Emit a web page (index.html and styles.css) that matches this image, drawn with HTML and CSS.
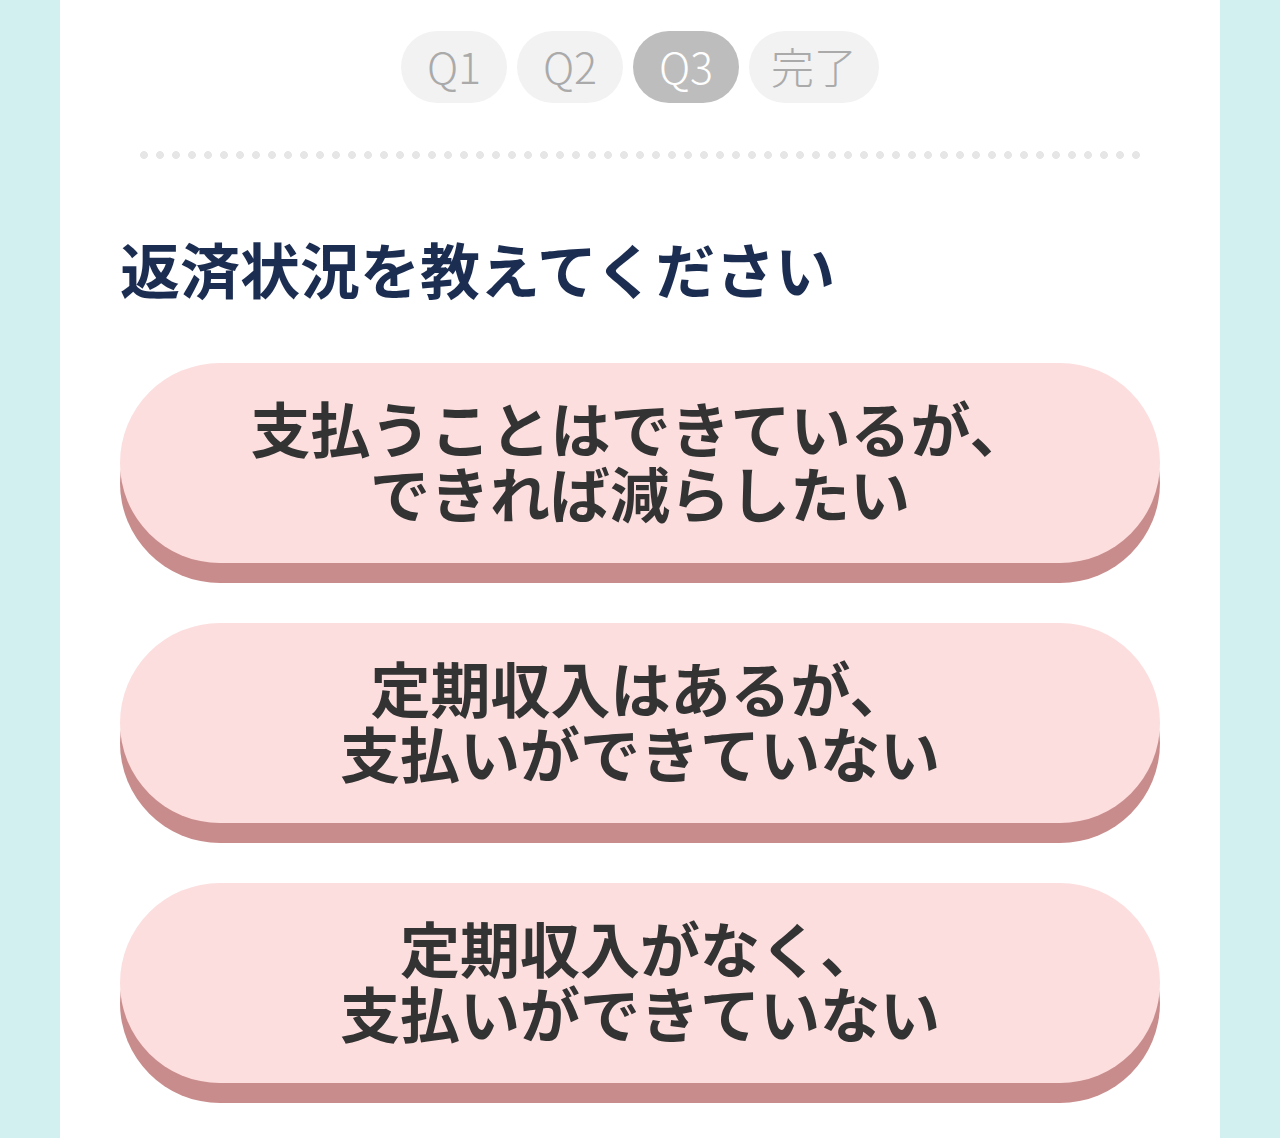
FILE: index.html
```html
<!DOCTYPE html>
<html lang="ja">
<head>
    <meta charset="UTF-8">
    <meta name="viewport" content="width=device-width, initial-scale=1.0">
    <title>返済状況を教えてください</title>
    <link rel="stylesheet" href="styles.css">
</head>
<body>
    <div class="panel">
        <div class="steps">
            <span class="step">Q1</span>
            <span class="step">Q2</span>
            <span class="step active">Q3</span>
            <span class="step">完了</span>
        </div>

        <div class="divider"></div>

        <h1 class="question">返済状況を教えてください</h1>

        <div class="options">
            <button class="option">支払うことはできているが、<br>できれば減らしたい</button>
            <button class="option">定期収入はあるが、<br>支払いができていない</button>
            <button class="option">定期収入がなく、<br>支払いができていない</button>
        </div>
    </div>
</body>
</html>
```

FILE: styles.css
```css
body {
    margin: 0;
    padding: 0;
    background: #d3f0f0;
    font-family: 'Noto Sans CJK JP', 'Noto Sans', sans-serif;
}

.panel {
    width: 1040px;
    min-height: 1138px;
    margin: 0 auto;
    padding: 31px 60px 0;
    background: #fff;
    box-sizing: content-box;
}

.steps {
    display: flex;
    justify-content: center;
    gap: 10px;
}

.step {
    display: flex;
    align-items: center;
    justify-content: center;
    min-width: 106px;
    height: 72px;
    padding: 0 22px 5px;
    box-sizing: border-box;
    border-radius: 36px;
    background: #f2f2f2;
    color: #aaa;
    font-size: 43px;
    font-weight: 300;
}

.step.active {
    background: #bdbdbd;
    color: #fff;
}

.divider {
    height: 8px;
    margin: 48px 20px 0;
    background-image: radial-gradient(circle at 4px 4px, #e6e6e6 3.6px, transparent 4.2px);
    background-size: 16px 8px;
}

.question {
    margin: 73px 0 0;
    font-size: 60px;
    line-height: 72px;
    font-weight: 700;
    color: #1c2d52;
}

.options {
    display: flex;
    flex-direction: column;
    gap: 60px;
    margin-top: 59px;
}

.option {
    height: 200px;
    padding: 0 0 8px;
    border: none;
    border-radius: 100px;
    background: #fcdede;
    box-shadow: 0 20px 0 #c98c8c;
    font-family: inherit;
    font-size: 60px;
    line-height: 65px;
    font-weight: 700;
    color: #333;
    cursor: pointer;
}
```
